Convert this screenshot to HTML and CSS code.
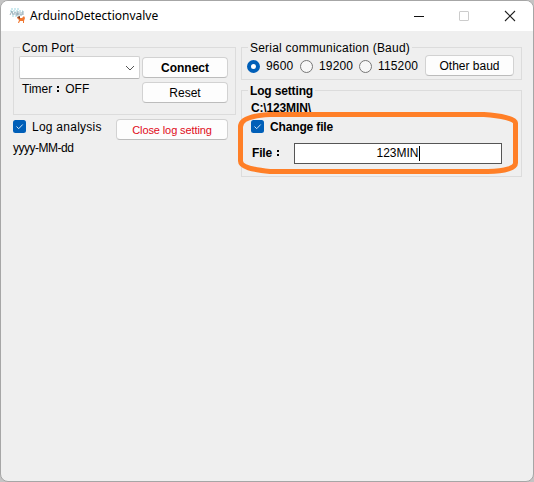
FILE: index.html
```html
<!DOCTYPE html>
<html lang="en">
<head>
<meta charset="utf-8">
<title>ArduinoDetectionvalve</title>
<link rel="stylesheet" href="styles.css">
</head>
<body>
<div class="window">
  <header class="titlebar">
    <svg class="app-icon" width="17" height="17" viewBox="0 0 17 17">
      <path d="M2 1h9M1 3h13M3 8h8" stroke="#bfe4ea" stroke-width="1.5" stroke-dasharray="2 1"/>
      <path d="M1 7l2-4 1 4M5 7V5l2-1M7 5h2v2H7zM9 3v4M11 4v3h2V4M14 3v4" fill="none" stroke="#7f9da9" stroke-width=".8"/>
      <path d="M8 9l2 1h3l2-2 1 2-1 3v2h-1v-2h-3l-1 2H9l1-3-2-2z" fill="#f07832"/>
      <path d="M8 9l3-1v3z" fill="#80422a"/>
    </svg>
    <h1 class="title">ArduinoDetectionvalve</h1>
    <svg class="caption-buttons" width="102" height="12" viewBox="0 0 102 12" fill="none">
      <path d="M0 6.500h10" stroke="#111"/>
      <rect x="45.500" y="1.500" width="9" height="9" rx=".5" stroke="#ccc"/>
      <path d="M91 1l10 10M101 1L91 11" stroke="#222" stroke-width="1.1"/>
    </svg>
  </header>
  <main class="content">
    <section class="column">
      <fieldset class="group com">
        <legend>Com Port</legend>
        <div class="com-left">
          <div class="combo"><svg width="10" height="6" viewBox="0 0 10 6"><path d="M1 1l4 4 4-4" fill="none" stroke="#555"/></svg></div>
          <div class="timer">Timer<i class="colon"></i>OFF</div>
        </div>
        <div class="com-buttons">
          <button class="btn strong">Connect</button>
          <button class="btn reset">Reset</button>
        </div>
      </fieldset>
      <div class="log-row">
        <label class="check"><svg width="13" height="13" viewBox="0 0 13 13"><rect width="13" height="13" rx="2.500" fill="#005fb8"/><path d="M3.500 6.500l2.200 2.200 4-4.200" fill="none" stroke="#d5e8f8"/></svg><span class="check-text">Log analysis</span></label>
        <button class="btn close-log">Close log setting</button>
      </div>
      <div class="date">yyyy-MM-dd</div>
    </section>
    <section class="column">
      <fieldset class="group serial">
        <legend>Serial communication (Baud)</legend>
        <span class="radio on"></span><span class="baud b1">9600</span>
        <span class="radio"></span><span class="baud b2">19200</span>
        <span class="radio"></span><span class="baud b3">115200</span>
        <button class="btn other">Other baud</button>
      </fieldset>
      <fieldset class="group log strong">
        <legend>Log setting</legend>
        <div class="path">C:\123MIN\</div>
        <label class="check"><svg width="13" height="13" viewBox="0 0 13 13"><rect width="13" height="13" rx="2.500" fill="#005fb8"/><path d="M3.500 6.500l2.200 2.200 4-4.200" fill="none" stroke="#d5e8f8"/></svg><span class="check-text">Change file</span></label>
        <div class="file-row"><span class="file-label">File<i class="colon"></i></span><div class="field">123MIN<span class="caret"></span></div></div>
        <svg class="marker" width="284" height="68" viewBox="236 109 284 68"><path d="M270 114.500H484C501 115.500 515.500 119 515.500 123V163C515.500 167.500 506 171.500 488 171.500H270C252 169.500 240.500 167 240.500 161V127C240.500 119 251 115.500 270 114.500Z" fill="none" stroke="#ff7f27" stroke-width="5"/></svg>
      </fieldset>
    </section>
  </main>
</div>
</body>
</html>
```
FILE: styles.css
```css
* { box-sizing: border-box; }
body {
  margin: 0;
  height: 482px;
  overflow: hidden;
  background: #c4c4c4;
  font: 12px/15px "Liberation Sans", sans-serif;
  color: #000;
}
.window {
  height: 482px;
  border: 1px solid #a6a6a6;
  border-radius: 8px;
  background: #efefef;
  overflow: hidden;
}
.titlebar {
  display: flex;
  align-items: center;
  height: 30px;
  padding: 0 17px 0 8px;
  background: #fff;
}
.app-icon { margin-right: 4px; }
.title {
  margin: 0;
  flex: 1;
  font: 12px/18px "Noto Sans", sans-serif;
}
.content {
  display: grid;
  grid-template-columns: 223px 281px;
  gap: 5px;
  padding: 9px 0 0 12px;
}
.group {
  display: flex;
  min-width: 0;
  margin: 0;
  padding: 0;
  border: 1px solid #dcdcdc;
}
.group legend {
  margin-left: 6px;
  padding: 1px 2px 0;
  height: 15px;
  white-space: nowrap;
}
.strong { font-weight: bold; letter-spacing: -0.15px; }
.com { height: 75px; padding: 1px 0 0 5px; }
.com legend { margin-left: 1px; letter-spacing: 0.15px; }
.com-left { width: 121px; }
.combo {
  display: flex;
  align-items: center;
  justify-content: flex-end;
  height: 23px;
  padding-right: 4px;
  border: 1px solid #d2d2d2;
  border-bottom-color: #b5b5b5;
  border-radius: 2px;
  background: #fff;
}
.timer { display: flex; padding: 3px 0 0 3px; }
.colon {
  width: 13px;
  height: 15px;
  background:
    linear-gradient(#000, #000) 5px 4px / 2px 2px no-repeat,
    linear-gradient(#000, #000) 5px 8px / 2px 2px no-repeat;
}
.com-buttons {
  display: grid;
  gap: 4px;
  align-content: start;
  margin: 1px 0 0 2px;
  width: 86px;
}
.btn {
  display: block;
  height: 21px;
  padding: 0;
  border: 1px solid #d2d2d2;
  border-bottom-color: #bcbcbc;
  border-radius: 4px;
  background: #fdfdfd;
  color: #000;
  font: 12px/18px "Liberation Sans", sans-serif;
  white-space: nowrap;
}
.btn.strong { font-weight: bold; letter-spacing: 0; }
.log-row {
  display: flex;
  justify-content: space-between;
  padding: 4px 8px 0 0;
}
.check { display: flex; align-items: center; gap: 6px; height: 15px; }
.check-text { padding-top: 2px; }
.log-row .check { letter-spacing: 0.25px; }
.btn.close-log { width: 112px; color: #e00b20; font-size: 11px; letter-spacing: -0.1px; }
.date { padding-top: 1px; letter-spacing: -0.5px; }
.serial {
  align-items: flex-start;
  height: 40px;
  padding-left: 5px;
}
.serial legend { margin-left: 1px; letter-spacing: 0.22px; }
.radio {
  flex: none;
  width: 13px;
  height: 13px;
  margin-top: 5px;
  border: 1px solid #777;
  border-radius: 50%;
  background: #f7f7f7;
}
.radio.on { border: 4px solid #005fb8; background: #fff; }
.baud { flex: none; padding: 4px 0 0 6px; letter-spacing: 0.15px; }
.b1 { width: 40px; }
.b2 { width: 46px; }
.b3 { width: 53px; }
.other { width: 89px; }
.log {
  position: relative;
  display: block;
  height: 94px;
  margin-top: 3px;
}
.path { padding-left: 9px; margin-top: 3px; }
.log .check { padding-left: 9px; margin-top: 3px; }
.file-row { display: flex; margin-top: 9px; padding-left: 10px; }
.file-label { display: flex; width: 42px; padding-top: 3px; }
.field {
  display: flex;
  align-items: center;
  justify-content: center;
  width: 208px;
  height: 21px;
  border: 1px solid #555;
  background: #fff;
  font-weight: normal;
  letter-spacing: 0;
}
.caret { width: 1px; height: 15px; background: #000; }
.marker { position: absolute; left: -6px; top: 11px; }
```
